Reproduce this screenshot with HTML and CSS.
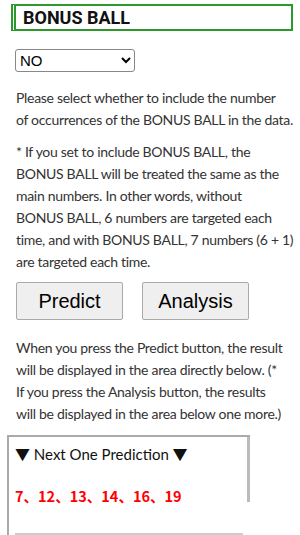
FILE: index.html
```html
<!DOCTYPE html>
<html lang="en">
<head>
    <meta charset="UTF-8">
    <meta name="viewport" content="width=device-width, initial-scale=1.0">
    <title>BONUS BALL</title>
    <link rel="stylesheet" href="styles.css">
</head>
<body>
    <div class="page">
        <h2 class="title">BONUS BALL</h2>

        <select class="bonus-select" id="bonus">
            <option value="0">NO</option>
            <option value="1">YES</option>
        </select>

        <p class="note first">Please select whether to include the number<br>
            of occurrences of the BONUS BALL in the data.</p>
        <p class="note">* If you set to include BONUS BALL, the<br>
            BONUS BALL will be treated the same as the<br>
            main numbers. In other words, without<br>
            BONUS BALL, 6 numbers are targeted each<br>
            time, and with BONUS BALL, 7 numbers (6 + 1)<br>
            are targeted each time.</p>

        <div class="buttons">
            <button type="button" class="btn">Predict</button>
            <button type="button" class="btn">Analysis</button>
        </div>

        <p class="note after-buttons">When you press the Predict button, the result<br>
            will be displayed in the area directly below. (*<br>
            If you press the Analysis button, the results<br>
            will be displayed in the area below one more.)</p>

        <div class="result">
            <div class="result-inner">
                <div class="result-head">&#9660; Next One Prediction &#9660;</div>
                <div class="result-nums">7、12、13、14、16、19</div>
                <div class="result-line"></div>
            </div>
            <div class="scrollbar"></div>
        </div>
    </div>
</body>
</html>
```

FILE: styles.css
```css
body {
    margin: 0;
    background: #fff;
    font-family: Lato, "Noto Sans CJK JP", sans-serif;
    color: #333;
}

.page {
    padding: 4px 12px 0 16px;
    overflow: hidden;
    height: 535px;
    box-sizing: border-box;
}

.title {
    margin: 0 -5px 0 -5px;
    height: 27px;
    box-sizing: border-box;
    border: 2px solid #2b9a2b;
    border-left: 5px double #2b9a2b;
    padding-left: 7px;
    font-family: Roboto, "Liberation Sans", sans-serif;
    font-size: 18px;
    font-weight: bold;
    line-height: 23px;
    color: #111;
}

.bonus-select {
    display: block;
    margin: 18px 0 0 -1px;
    width: 120px;
    height: 23px;
    font-family: "Liberation Sans", Arial, sans-serif;
    font-size: 15px;
    color: #000;
    border: 1px solid #888;
    border-radius: 3px;
    background: #fff;
}

.note {
    margin: 10px -12px 0 0;
    font-size: 14px;
    letter-spacing: -0.3px;
    line-height: 22px;
    white-space: nowrap;
}

.note.first {
    margin-top: 15px;
}

.note.after-buttons {
    margin-top: 17px;
}

.buttons {
    display: flex;
    gap: 19px;
    margin-top: 9px;
}

.btn {
    width: 107px;
    height: 38px;
    font-family: "Liberation Sans", Arial, sans-serif;
    font-size: 20px;
    color: #000;
    background: #efefef;
    border: 1px solid #aaa;
    border-radius: 2px;
}

.result {
    display: flex;
    margin: 10px 0 0 -9px;
    width: 241px;
    border-top: 2px solid #aaa;
    border-left: 2px solid #aaa;
}

.result-inner {
    flex: 1;
    padding: 6px 4px 0 6px;
}

.result-head {
    font-size: 15px;
    line-height: 22px;
    color: #111;
}

.result-nums {
    margin-top: 20px;
    font-family: "Noto Sans CJK JP", sans-serif;
    font-size: 14.5px;
    font-weight: bold;
    line-height: 22px;
    color: #f00;
}

.result-line {
    margin-top: 26px;
    border-top: 2px solid #ccc;
}

.scrollbar {
    width: 3px;
    height: 65px;
    background: #bbb;
}
```
